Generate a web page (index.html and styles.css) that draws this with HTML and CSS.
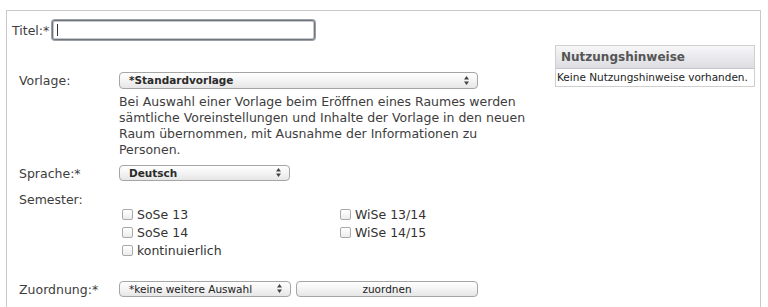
FILE: index.html
```html
<!DOCTYPE html>
<html lang="de">
<head>
    <meta charset="UTF-8">
    <title>Raum anlegen</title>
    <link rel="stylesheet" href="styles.css">
</head>
<body>

    <div class="frame">
        <div class="title-row">
            <label for="titel">Titel:*</label>
            <span class="input-wrap">
                <input type="text" id="titel" class="title-input">
                <span class="caret"></span>
            </span>
        </div>

        <div class="content">
            <div class="form">
                <div class="row">
                    <span class="label">Vorlage:</span>
                    <div class="select select-wide">*Standardvorlage
                        <svg class="arrows" width="5" height="9" viewBox="0 0 5 9"><path d="M2.5 0 L5 3.5 H0 Z M2.5 9 L5 5.5 H0 Z" fill="#444"/></svg>
                    </div>
                </div>
                <p class="desc">Bei Auswahl einer Vorlage beim Eröffnen eines Raumes werden<br>
                sämtliche Voreinstellungen und Inhalte der Vorlage in den neuen<br>
                Raum übernommen, mit Ausnahme der Informationen zu<br>
                Personen.</p>

                <div class="row row-sprache">
                    <span class="label">Sprache:*</span>
                    <div class="select select-small">Deutsch
                        <svg class="arrows" width="5" height="9" viewBox="0 0 5 9"><path d="M2.5 0 L5 3.5 H0 Z M2.5 9 L5 5.5 H0 Z" fill="#444"/></svg>
                    </div>
                </div>

                <div class="label label-semester">Semester:</div>
                <div class="checks">
                    <span class="check"><span class="box"></span>SoSe 13</span>
                    <span class="check"><span class="box"></span>WiSe 13/14</span>
                    <span class="check"><span class="box"></span>SoSe 14</span>
                    <span class="check"><span class="box"></span>WiSe 14/15</span>
                    <span class="check"><span class="box"></span>kontinuierlich</span>
                </div>

                <div class="row row-zuordnung">
                    <span class="label">Zuordnung:*</span>
                    <div class="select select-zu">*keine weitere Auswahl
                        <svg class="arrows" width="5" height="9" viewBox="0 0 5 9"><path d="M2.5 0 L5 3.5 H0 Z M2.5 9 L5 5.5 H0 Z" fill="#444"/></svg>
                    </div>
                    <div class="btn">zuordnen</div>
                </div>
            </div>

            <div class="aside">
                <div class="aside-head">Nutzungshinweise</div>
                <div class="aside-body">Keine Nutzungshinweise vorhanden.</div>
            </div>
        </div>
    </div>

</body>
</html>
```

FILE: styles.css
```css
body {
    margin: 0;
    background: #fff;
    font-family: 'DejaVu Sans', sans-serif;
    font-size: 12.5px;
    color: #3d3d3d;
}
.frame {
    margin: 10px 0 0 6px;
    width: 753px;
    min-height: 310px;
    border: 1px solid #c9c9c9;
    border-bottom: none;
}
.title-row {
    display: flex;
    align-items: center;
    padding: 9px 0 0 5px;
    gap: 3px;
}
.input-wrap {
    position: relative;
    display: block;
}
.title-input {
    display: block;
    width: 263px;
    height: 20px;
    box-sizing: border-box;
    margin: 0;
    border: 1px solid #6f767c;
    border-radius: 3px;
    box-shadow: 0 0 0 1px #9aa0a6, inset 0 0 0 1px #c6cace;
    outline: none;
    background: #fff;
}
.caret {
    position: absolute;
    left: 5px;
    top: 4px;
    width: 1px;
    height: 12px;
    background: #333;
}
.content {
    display: flex;
    align-items: flex-start;
}
.form {
    flex: 1;
    padding: 32px 0 0 12px;
}
.row {
    display: flex;
    align-items: center;
}
.label {
    width: 100px;
    flex-shrink: 0;
}
.select, .btn {
    position: relative;
    box-sizing: border-box;
    height: 17px;
    border: 1px solid #a5a5a5;
    border-radius: 4px;
    background: linear-gradient(#ffffff, #f1f1f1 60%, #e6e6e6);
    font-size: 10.5px;
    font-weight: bold;
    color: #2b2b2b;
    line-height: 15px;
    padding-left: 9px;
}
.arrows {
    position: absolute;
    right: 8px;
    top: 3px;
}
.select-small .arrows, .select-zu .arrows {
    top: 2px;
}
.select-wide {
    width: 359px;
}
.desc {
    margin: 5px 0 0 100px;
    line-height: 16px;
}
.row-sprache {
    margin-top: 7px;
}
.select-small {
    width: 171px;
    height: 16px;
    line-height: 14px;
}
.label-semester {
    margin-top: 11px;
    line-height: 16px;
}
.checks {
    display: grid;
    grid-template-columns: 218px 200px;
    grid-auto-rows: 18px;
    margin: -3px 0 0 103px;
    color: #333;
}
.check {
    display: flex;
    align-items: center;
    gap: 4px;
}
.box {
    width: 9px;
    height: 9px;
    border: 1px solid #a9a9a9;
    border-radius: 2px;
    background: linear-gradient(#fff, #ececec);
}
.row-zuordnung {
    margin-top: 22px;
    gap: 0;
}
.select-zu {
    width: 172px;
    height: 16px;
    line-height: 14px;
    font-weight: normal;
    color: #222;
}
.btn {
    width: 182px;
    height: 16px;
    line-height: 14px;
    margin-left: 5px;
    padding: 0;
    text-align: center;
    font-weight: normal;
    color: #222;
}
.aside {
    width: 198px;
    margin: 5px 5px 0 0;
    border: 1px solid #cfcfcf;
}
.aside-head {
    height: 22px;
    line-height: 22px;
    padding-left: 5px;
    background: linear-gradient(#f7f7f9, #dcdce2);
    border-bottom: 1px solid #c4c4cc;
    font-weight: bold;
    font-size: 12px;
    color: #555;
}
.aside-body {
    padding: 2px 0 3px 1px;
    font-size: 10.5px;
    color: #222;
}
```
